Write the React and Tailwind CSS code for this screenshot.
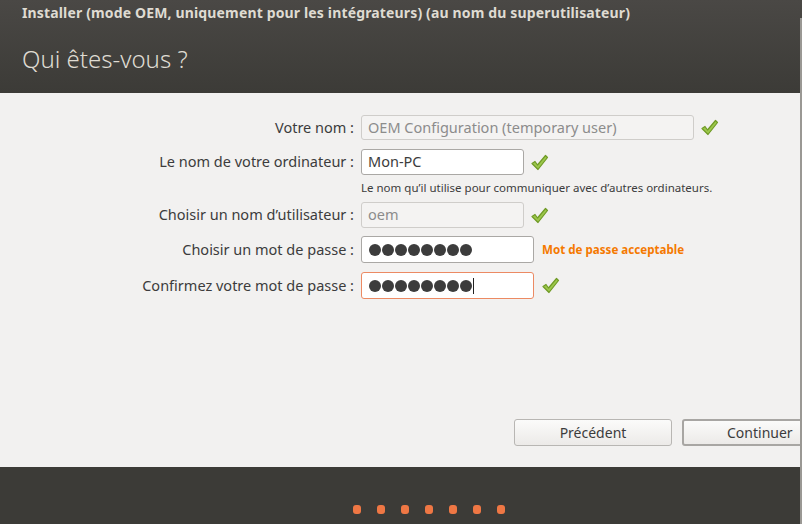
import React from 'react'

const Check = () => (
  <svg width="19" height="17" viewBox="0 0 19 17" className="shrink-0">
    <path d="M2 9.5 L5 7.5 L7.5 11 L15.5 1.5 L17.5 3.5 L8 15.5 Z" fill="#9cc74b" stroke="#6f9a25" strokeWidth="1.2" strokeLinejoin="round" />
  </svg>
)

const Dots = () => (
  <div className="flex gap-[1px] items-center">
    {[0, 1, 2, 3, 4, 5, 6, 7].map(i => (
      <span key={i} className="w-[12px] h-[12px] rounded-full bg-[#3c3c3c]"></span>
    ))}
  </div>
)

function Row({ label, children, className = '' }) {
  return (
    <div className={`flex items-center ${className}`}>
      <div className="w-[355px] pr-[1px] text-right text-[14.5px] text-[#3c3c3c]">{label}</div>
      <div className="ml-[6px] flex items-center">{children}</div>
    </div>
  )
}

export default function App() {
  return (
    <div className="w-[802px] h-[524px] overflow-hidden flex flex-col bg-[#f2f1f0] relative" style={{ fontFamily: '"Noto Sans", "Open Sans", sans-serif' }}>
      {/* entete */}
      <div className="h-[93px] bg-gradient-to-b from-[#4a4845] to-[#3c3b37] px-[22px] pt-[2px]">
        <div className="text-[14px] font-bold text-[#dfdbd2] tracking-[0.15px]">Installer (mode OEM, uniquement pour les intégrateurs) (au nom du superutilisateur)</div>
        <div className="mt-[18px] text-[24px] text-[#dfdbd2] font-light">Qui êtes-vous ?</div>
      </div>
      {/* formulaire */}
      <div className="flex-1 flex flex-col pt-[22px]">
        <Row label="Votre nom :">
          <div className="w-[333px] h-[25px] rounded-[3px] border border-[#cfcdca] bg-[#f4f3f2] px-[6px] flex items-center text-[14.5px] text-[#8c8c8c]">OEM Configuration (temporary user)</div>
          <span className="ml-[6px]"><Check /></span>
        </Row>
        <Row label="Le nom de votre ordinateur :" className="mt-[9px]">
          <div className="w-[163px] h-[26px] rounded-[3px] border border-[#aaa8a5] bg-white px-[6px] flex items-center text-[14.5px] text-[#3c3c3c]">Mon-PC</div>
          <span className="ml-[6px]"><Check /></span>
        </Row>
        <div className="ml-[361px] mt-[4px] text-[11.5px] text-[#3c3c3c]">Le nom qu’il utilise pour communiquer avec d’autres ordinateurs.</div>
        <Row label="Choisir un nom d’utilisateur :" className="mt-[6px]">
          <div className="w-[163px] h-[26px] rounded-[3px] border border-[#cfcdca] bg-[#f4f3f2] px-[6px] flex items-center text-[14.5px] text-[#8c8c8c]">oem</div>
          <span className="ml-[6px]"><Check /></span>
        </Row>
        <Row label="Choisir un mot de passe :" className="mt-[8px]">
          <div className="w-[173px] h-[27px] rounded-[3px] border border-[#aaa8a5] bg-white px-[7px] flex items-center"><Dots /></div>
          <span className="ml-[8px] text-[11.6px] font-bold text-[#f57900]">Mot de passe acceptable</span>
        </Row>
        <Row label="Confirmez votre mot de passe :" className="mt-[9px]">
          <div className="w-[173px] h-[27px] rounded-[3px] border border-[#ec8a63] bg-white px-[7px] flex items-center">
            <Dots />
            <span className="w-[1px] h-[16px] bg-[#222] ml-[1px]"></span>
          </div>
          <span className="ml-[7px]"><Check /></span>
        </Row>
        <div className="flex-1"></div>
        {/* boutons */}
        <div className="flex gap-[10px] pl-[514px] pb-[21px]">
          <button className="w-[158px] h-[27px] shrink-0 rounded-[3px] border border-[#b8b6b3] bg-gradient-to-b from-[#fbfbfa] to-[#eceae8] text-[14px] text-[#3c3c3c]">Précédent</button>
          <button className="w-[140px] h-[27px] shrink-0 rounded-[3px] border-2 border-[#a8a6a3] bg-gradient-to-b from-[#fbfbfa] to-[#eceae8] text-[14px] text-[#3c3c3c] text-left pl-[43px]">Continuer</button>
        </div>
      </div>
      {/* pied */}
      <div className="h-[57px] bg-[#3c3b37] flex justify-center items-end pb-[10px] pl-[55px]">
        <div className="flex gap-[16px]">
          {[0, 1, 2, 3, 4, 5, 6].map(i => (
            <span key={i} className="w-[8px] h-[9px] rounded-[3px] bg-[#ef7744]"></span>
          ))}
        </div>
      </div>
      <div className="absolute right-0 top-[18px] bottom-0 w-[2px] bg-[#9a9894]"></div>
    </div>
  )
}
